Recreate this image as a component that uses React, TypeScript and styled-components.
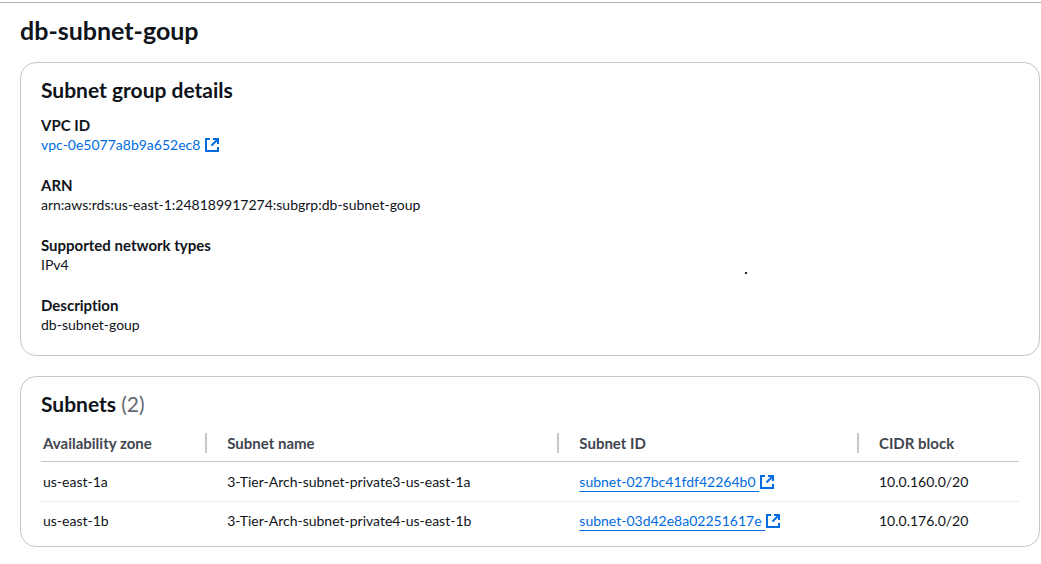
import React from "react";
import styled, { createGlobalStyle } from "styled-components";

const GlobalStyle = createGlobalStyle`
  *, *::before, *::after { box-sizing: border-box; }
  body {
    margin: 0;
    background: #ffffff;
    color: #0f141a;
    font-family: Lato, "Open Sans", sans-serif;
    font-size: 14px;
    line-height: 20px;
    font-variant-ligatures: none;
  }
`;

const Page = styled.main`
  position: relative;
  padding: 2px 1px 17px 0;
`;

const TopRule = styled.hr`
  height: 1px;
  margin: 0 -1px 0 0;
  border: 0;
  background: #b4b4bb;
`;

const Content = styled.div`
  display: flex;
  flex-direction: column;
  gap: 20px;
  padding: 12px 0 0 20px;
`;

const PageTitle = styled.h1`
  margin: 0 0 -3px;
  font-size: 25px;
  line-height: 30px;
  font-weight: 700;
`;

const Card = styled.section<{ $flush?: boolean }>`
  border: 1px solid #c6c6cd;
  border-radius: 16px;
  padding: 15px 20px ${(p) => (p.$flush ? "5px" : "20px")};
`;

const CardTitle = styled.h2`
  margin: 0;
  font-size: 21px;
  line-height: 24px;
  font-weight: 700;
`;

const Count = styled.span`
  color: #656871;
  font-weight: 400;
`;

const Details = styled.dl`
  display: flex;
  flex-direction: column;
  gap: 20px;
  margin: 13px 0 0;
`;

const Label = styled.dt`
  font-size: 15px;
  font-weight: 700;
`;

const Value = styled.dd`
  margin: 0;
`;

const Link = styled.a<{ $underlined?: boolean }>`
  color: #006ce0;
  text-decoration: ${(p) => (p.$underlined ? "underline" : "none")};
  text-decoration-thickness: 1px;
  text-underline-offset: 4px;
  white-space: nowrap;
`;

const Icon = styled.svg`
  display: inline-block;
  width: 16px;
  height: 16px;
  vertical-align: -3px;
`;

const Table = styled.table`
  width: 100%;
  margin-top: 9px;
  table-layout: fixed;
  border-collapse: separate;
  border-spacing: 0;
`;

const HeadCell = styled.th<{ $width: string }>`
  width: ${(p) => p.$width};
  padding: 8px 0;
  border-bottom: 1px solid #c6c6cd;
  color: #424650;
  font-size: 15px;
  font-weight: 700;
  text-align: left;
`;

const HeadLabel = styled.div`
  display: flex;
  align-items: center;
  height: 20px;
  padding-left: 20px;
  border-right: 2px solid #c6c6cd;

  th:first-child > & { padding-left: 2px; }
  th:last-child > & { border-right: 0; }
`;

const Cell = styled.td`
  padding: 10px 0 9px 20px;
  white-space: nowrap;

  &:first-child { padding-left: 2px; }
  tr:not(:last-child) > & { border-bottom: 1px solid #ebebf0; }
  tr:last-child > & {
    padding-top: 9px;
    padding-bottom: 10px;
  }
`;

const Speck = styled.span`
  position: absolute;
  top: 272px;
  left: 745px;
  width: 2px;
  height: 2px;
  background: #20242a;
`;

const ExternalIcon = () => (
  <Icon viewBox="0 0 16 16" fill="none" stroke="currentColor" strokeWidth="2" aria-hidden="true">
    <path d="M6 2H2v12h12V10" />
    <path d="M9 2h5v5" />
    <path d="M7.500 8.500L14 2" />
  </Icon>
);

const ExternalLink = ({ text, underlined }: { text: string; underlined?: boolean }) => (
  <Link href="#" $underlined={underlined}>
    {text} <ExternalIcon />
  </Link>
);

const details: { label: string; value: React.ReactNode }[] = [
  { label: "VPC ID", value: <ExternalLink text="vpc-0e5077a8b9a652ec8" /> },
  { label: "ARN", value: "arn:aws:rds:us-east-1:248189917274:subgrp:db-subnet-goup" },
  { label: "Supported network types", value: "IPv4" },
  { label: "Description", value: "db-subnet-goup" },
];

const columns = [
  { label: "Availability zone", width: "17%" },
  { label: "Subnet name", width: "36%" },
  { label: "Subnet ID", width: "auto" },
  { label: "CIDR block", width: "160px" },
];

const subnets = [
  { zone: "us-east-1a", name: "3-Tier-Arch-subnet-private3-us-east-1a", id: "subnet-027bc41fdf42264b0", cidr: "10.0.160.0/20" },
  { zone: "us-east-1b", name: "3-Tier-Arch-subnet-private4-us-east-1b", id: "subnet-03d42e8a02251617e", cidr: "10.0.176.0/20" },
];

export default function App() {
  return (
    <>
      <GlobalStyle />
      <Page>
        <TopRule />
        <Content>
          <PageTitle>db-subnet-goup</PageTitle>
          <Card>
            <CardTitle>Subnet group details</CardTitle>
            <Details>
              {details.map((d) => (
                <div key={d.label}>
                  <Label>{d.label}</Label>
                  <Value>{d.value}</Value>
                </div>
              ))}
            </Details>
          </Card>
          <Card $flush>
            <CardTitle>
              Subnets <Count>(2)</Count>
            </CardTitle>
            <Table>
              <thead>
                <tr>
                  {columns.map((c) => (
                    <HeadCell key={c.label} $width={c.width} scope="col">
                      <HeadLabel>{c.label}</HeadLabel>
                    </HeadCell>
                  ))}
                </tr>
              </thead>
              <tbody>
                {subnets.map((s) => (
                  <tr key={s.id}>
                    <Cell>{s.zone}</Cell>
                    <Cell>{s.name}</Cell>
                    <Cell>
                      <ExternalLink text={s.id} underlined />
                    </Cell>
                    <Cell>{s.cidr}</Cell>
                  </tr>
                ))}
              </tbody>
            </Table>
          </Card>
        </Content>
        <Speck />
      </Page>
    </>
  );
}
